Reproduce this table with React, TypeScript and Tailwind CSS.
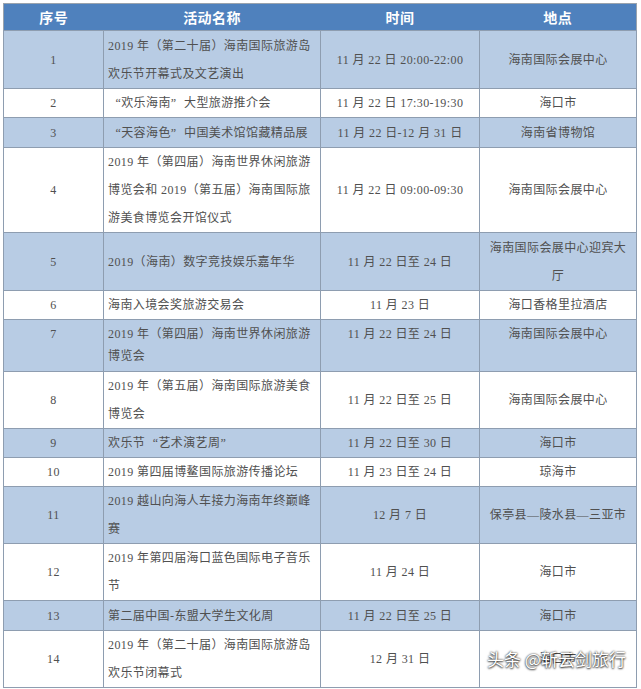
import React from "react";

type Row = {
  n: string;
  name: string[];
  time: string;
  place: string[];
  h: number;
  blue?: boolean;
  top?: boolean;
};

const rows: Row[] = [
  { n: "1", name: ["2019 年（第二十届）海南国际旅游岛", "欢乐节开幕式及文艺演出"], time: "11 月 22 日 20:00-22:00", place: ["海南国际会展中心"], h: 58, blue: true },
  { n: "2", name: ["“欢乐海南”大型旅游推介会"], time: "11 月 22 日 17:30-19:30", place: ["海口市"], h: 29 },
  { n: "3", name: ["“天容海色”中国美术馆馆藏精品展"], time: "11 月 22 日-12 月 31 日", place: ["海南省博物馆"], h: 30, blue: true },
  { n: "4", name: ["2019 年（第四届）海南世界休闲旅游", "博览会和 2019（第五届）海南国际旅", "游美食博览会开馆仪式"], time: "11 月 22 日 09:00-09:30", place: ["海南国际会展中心"], h: 85 },
  { n: "5", name: ["2019（海南）数字竞技娱乐嘉年华"], time: "11 月 22 日至 24 日", place: ["海南国际会展中心迎宾大", "厅"], h: 58, blue: true },
  { n: "6", name: ["海南入境会奖旅游交易会"], time: "11 月 23 日", place: ["海口香格里拉酒店"], h: 28 },
  { n: "7", name: ["2019 年（第四届）海南世界休闲旅游", "博览会"], time: "11 月 22 日至 24 日", place: ["海南国际会展中心"], h: 52, blue: true, top: true },
  { n: "8", name: ["2019 年（第五届）海南国际旅游美食", "博览会"], time: "11 月 22 日至 25 日", place: ["海南国际会展中心"], h: 57 },
  { n: "9", name: ["欢乐节“艺术演艺周”"], time: "11 月 22 日至 30 日", place: ["海口市"], h: 29, blue: true },
  { n: "10", name: ["2019 第四届博鳌国际旅游传播论坛"], time: "11 月 23 日至 24 日", place: ["琼海市"], h: 29 },
  { n: "11", name: ["2019 越山向海人车接力海南年终巅峰", "赛"], time: "12 月 7 日", place: ["保亭县—陵水县—三亚市"], h: 57, blue: true },
  { n: "12", name: ["2019 年第四届海口蓝色国际电子音乐", "节"], time: "11 月 24 日", place: ["海口市"], h: 56 },
  { n: "13", name: ["第二届中国-东盟大学生文化周"], time: "11 月 22 日至 25 日", place: ["海口市"], h: 30, blue: true },
  { n: "14", name: ["2019 年（第二十届）海南国际旅游岛", "欢乐节闭幕式"], time: "12 月 31 日", place: ["海口市"], h: 57 },
];

const font = "font-['Liberation_Serif','Noto_Sans_CJK_SC',serif]";

// curly quotes are full width in the source table
function withQuotes(text: string) {
  return text.split(/([“”])/).map((part, i) =>
    part === "“" || part === "”" ? (
      <span
        key={i}
        className={`inline-block w-[1.1em] ${part === "“" ? "text-right" : "text-left"}`}
      >
        {part}
      </span>
    ) : (
      part
    )
  );
}

function Lines({ items, top }: { items: string[]; top?: boolean }) {
  return (
    <>
      {items.map((t, i) => (
        <div
          key={i}
          className={`whitespace-nowrap ${top ? "leading-[22px]" : "leading-[28px]"}`}
        >
          {withQuotes(t)}
        </div>
      ))}
    </>
  );
}

export default function App() {
  return (
    <div className="relative min-h-[689px] bg-white pt-[3px] pl-[3px]">
      <table
        className={`table-fixed border-collapse w-[633px] border border-[#9aa3ad] text-[12px] tracking-[0.4px] text-[#505050] ${font}`}
      >
        <colgroup>
          <col className="w-[100px]" />
          <col className="w-[217px]" />
          <col className="w-[159px]" />
          <col className="w-[157px]" />
        </colgroup>
        <thead>
          <tr className="h-[27px] bg-[#4f81bd] text-white text-[14px] font-bold">
            <th className="text-center font-['Noto_Sans_CJK_SC',sans-serif]">序号</th>
            <th className="text-center font-['Noto_Sans_CJK_SC',sans-serif]">活动名称</th>
            <th className="text-center font-['Noto_Sans_CJK_SC',sans-serif]">时间</th>
            <th className="text-center font-['Noto_Sans_CJK_SC',sans-serif]">地点</th>
          </tr>
        </thead>
        <tbody>
          {rows.map((r) => {
            const cell = `border border-[#8e9db0] p-0 ${r.top ? "align-top pt-[3px]" : "align-middle"}`;
            return (
              <tr
                key={r.n}
                style={{ height: r.h }}
                className={r.blue ? "bg-[#b8cce4]" : "bg-white"}
              >
                <td className={`${cell} text-center`}>
                  <Lines items={[r.n]} top={r.top} />
                </td>
                <td className={`${cell} text-left pl-[4px]`}>
                  <Lines items={r.name} top={r.top} />
                </td>
                <td className={`${cell} text-center`}>
                  <Lines items={[r.time]} top={r.top} />
                </td>
                <td className={`${cell} text-center`}>
                  <Lines items={r.place} top={r.top} />
                </td>
              </tr>
            );
          })}
        </tbody>
      </table>
      <div className="absolute left-[487px] top-[646px] whitespace-nowrap text-[17px] leading-[26px] text-white font-['Noto_Sans_CJK_SC',sans-serif] [text-shadow:0_0_2px_rgba(0,0,0,0.9),0_1px_2px_rgba(0,0,0,0.7)]">
        头条 @斩云剑旅行
      </div>
    </div>
  );
}
